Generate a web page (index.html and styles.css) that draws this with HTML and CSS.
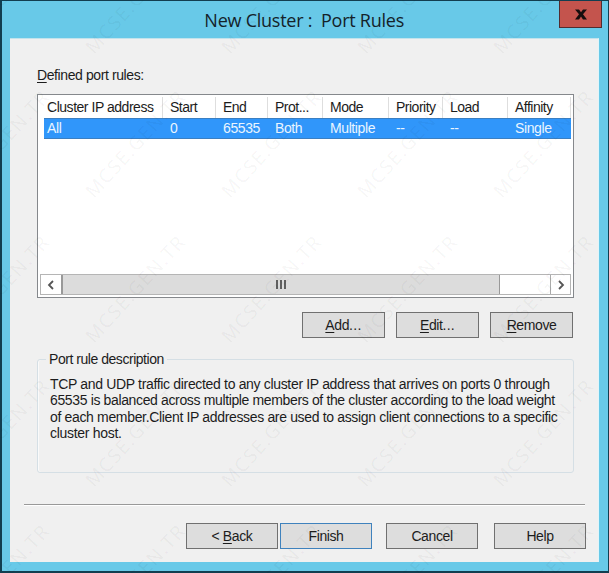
FILE: index.html
```html
<!DOCTYPE html>
<html lang="en">
<head>
<meta charset="utf-8">
<title>New Cluster : Port Rules</title>
<link rel="stylesheet" href="styles.css">
</head>
<body>
<div class="window">
  <header class="titlebar">
    <h1 class="title">New Cluster :&nbsp; Port Rules</h1>
    <button class="close" aria-label="Close"><svg width="12" height="11" viewBox="0 0 12 11"><path d="M0 .5h4L6 3.200 8 .5h4L8 5.300 12 10.500H8L6 7.500 4 10.500H0L4 5.300z" fill="#160e0e"/></svg></button>
  </header>
  <main class="client">
    <div class="label"><u>D</u>efined port rules:</div>
    <section class="list">
      <div class="row head">
        <span class="wide">Cluster IP address</span><span>Start</span><span>End</span><span>Prot...</span><span>Mode</span><span>Priority</span><span>Load</span><span>Affinity</span>
      </div>
      <div class="row selected">
        <span>All</span><span>0</span><span>65535</span><span>Both</span><span>Multiple</span><span>--</span><span>--</span><span>Single</span>
      </div>
      <div class="scroll">
        <div class="arrow"><svg width="8" height="10" viewBox="0 0 8 10"><path d="M6 1L2 5l4 4" fill="none" stroke="#555" stroke-width="1.800"/></svg></div>
        <div class="thumb"><i></i><i></i><i></i></div>
        <div class="arrow right"><svg width="8" height="10" viewBox="0 0 8 10"><path d="M2 1l4 4-4 4" fill="none" stroke="#555" stroke-width="1.800"/></svg></div>
      </div>
    </section>
    <div class="actions">
      <button class="btn"><span><u>A</u>dd<span class="dots">...</span></span></button>
      <button class="btn"><span><u>E</u>dit<span class="dots">...</span></span></button>
      <button class="btn"><span><u>R</u>emove</span></button>
    </div>
    <fieldset class="group">
      <legend>Port rule description</legend>
      <p class="l1">TCP and UDP traffic directed to any cluster IP address that arrives on ports 0 through</p>
      <p class="l2">65535 is balanced across multiple members of the cluster according to the load weight</p>
      <p class="l3">of each member.Client IP addresses are used to assign client connections to a specific</p>
      <p class="l4">cluster host.</p>
    </fieldset>
    <footer class="footer">
      <button class="btn"><span>&lt; <u>B</u>ack</span></button>
      <button class="btn default"><span>Finish</span></button>
      <button class="btn cancel"><span>Cancel</span></button>
      <button class="btn help"><span>Help</span></button>
    </footer>
  </main>
</div>
<svg class="watermark" width="609" height="573" viewBox="0 0 609 573">
  <defs>
    <text id="mark" transform="rotate(-47.500)" textLength="136">MCSE.GEN.TR</text>
    <g id="line"><use href="#mark" x="0"/><use href="#mark" transform="translate(136 0)"/><use href="#mark" transform="translate(272 0)"/><use href="#mark" transform="translate(408 0)"/><use href="#mark" transform="translate(544 0)"/></g>
  </defs>
  <use href="#line" transform="translate(-42 55)"/>
  <use href="#line" transform="translate(-42 199)"/>
  <use href="#line" transform="translate(-42 344)"/>
  <use href="#line" transform="translate(-42 488)"/>
  <use href="#line" transform="translate(-42 633)"/>
</svg>
</body>
</html>
```
FILE: styles.css
```css
* { box-sizing: border-box; }
body {
  margin: 0;
  width: 609px;
  height: 573px;
  overflow: hidden;
  font: 14px/16px "Liberation Sans", Arial, sans-serif;
  letter-spacing: -0.4px;
  color: #1c1c1c;
}
u { text-decoration-thickness: 1px; text-underline-offset: 2px; }
.window {
  width: 609px;
  height: 573px;
  display: flex;
  flex-direction: column;
  background: #68c9e8;
  border: 1px solid #123e50;
  border-left-width: 2px;
  border-bottom-width: 2px;
  padding: 0 9px 9px 8px;
}
.titlebar {
  height: 37px;
  flex: none;
  display: flex;
  justify-content: flex-end;
  align-items: flex-start;
  margin-right: -3px;
}
.title {
  margin: 5px 155px 0 0;
  font: 18px/28px "Open Sans", "Noto Sans", sans-serif;
  letter-spacing: -0.25px;
  white-space: pre;
  color: #14222a;
}
.close {
  width: 43px;
  height: 27px;
  padding: 0 0 0 1px;
  border: 1px solid #522c30;
  border-top: 0;
  background: #c4544d;
  display: flex;
  align-items: center;
  justify-content: center;
}
.client {
  flex: 1;
  background: #f0f0f0;
  border-top: 1px solid #c3e3ec;
  border-right: 1px solid #e0f5fa;
  padding: 28px 13px 0 14px;
}
.label { margin-left: 13px; height: 27px; }
.list {
  margin-left: 13px;
  width: 537px;
  height: 204px;
  background: #fff;
  border: 1px solid #85888c;
  padding: 2px;
  display: flex;
  flex-direction: column;
}
.row {
  display: grid;
  grid-template-columns: 119px 53px 52px 55px 66px 54px 65px 1fr;
  flex: none;
  margin-left: 4px;
}
.row span { padding-left: 7px; white-space: nowrap; overflow: hidden; }
.row span:first-child { padding-left: 3px; }
.head { height: 21px; line-height: 21px; letter-spacing: -0.5px; }
.head span { border-right: 1px solid #dedede; }
.head .wide { letter-spacing: -0.47px; }
.selected {
  height: 21px;
  background: #3096fa;
  color: #eaf5ff;
  border: 1px solid #3b7fc2;
  border-width: 1px 0;
  line-height: 19px;
}
.scroll {
  margin-top: auto;
  height: 21px;
  display: flex;
  border: 1px solid #b5b5b5;
}
.arrow {
  width: 20px;
  display: flex;
  align-items: center;
  justify-content: center;
}
.arrow.right { margin-left: auto; border-left: 1px solid #aaa; }
.thumb {
  width: 439px;
  background: #dcdcdc;
  border: 1px solid #999;
  border-width: 0 1px 0 2px;
  display: flex;
  align-items: center;
  justify-content: center;
  gap: 2px;
}
.thumb i { width: 2px; height: 9px; background: #606060; }
.btn {
  flex: none;
  width: 83px;
  height: 26px;
  padding: 0;
  font: inherit;
  letter-spacing: inherit;
  color: inherit;
  background: #dddddd;
  border: 1px solid #707070;
}
.dots { letter-spacing: 0.3px; }
.actions {
  display: flex;
  gap: 11px;
  justify-content: flex-end;
  margin: 14px 12px 0 0;
}
.group {
  margin: 13px 0 0 13px;
  width: 537px;
  height: 122px;
  min-width: 0;
  border: 1px solid #d5dfe5;
  border-radius: 3px;
  padding: 9px 0 0 12px;
  box-shadow: inset 1px 0 #fafafa;
}
.group legend { padding: 0 3px; margin-left: -4px; letter-spacing: -0.46px; }
.group p { margin: 0; height: 16.400px; line-height: 16px; white-space: nowrap; }
.group .l1 { letter-spacing: -0.33px; }
.group .l2 { letter-spacing: -0.36px; }
.group .l3 { letter-spacing: -0.34px; }
.group .l4 { letter-spacing: -0.3px; }
.footer {
  margin-top: 31px;
  padding: 18px 0 0 162px;
  border-top: 1px solid #999;
  box-shadow: inset 0 1px #fff;
  display: flex;
}
.footer .btn { width: 92px; }
.footer .default { margin-left: 2px; border-color: #3f82bd; }
.footer .cancel { margin-left: 14px; }
.footer .help { margin-left: 16px; }
.watermark {
  position: absolute;
  left: 0;
  top: 0;
  pointer-events: none;
  font: 500 19px "Open Sans", sans-serif;
  letter-spacing: 0;
  fill: rgba(0, 0, 0, 0.05);
}
```
